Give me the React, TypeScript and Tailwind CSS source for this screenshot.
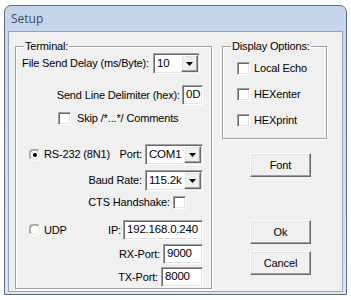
import React from 'react';

const sunken =
  'bg-white border border-t-[#a0a0a0] border-l-[#a0a0a0] border-b-white border-r-white shadow-[inset_1px_1px_0_#696969,inset_-1px_-1px_0_#e3e3e3]';
const raised =
  'bg-[#f0f0f0] border border-t-white border-l-white border-b-[#696969] border-r-[#696969] shadow-[inset_-1px_-1px_0_#a0a0a0,inset_1px_1px_0_#e3e3e3]';

function Combo({ value, w }: { value: string; w: string }) {
  return (
    <div className={`${sunken} ${w} h-[21px] flex items-center p-[1px]`}>
      <span className="flex-1 pl-[2px] text-[11.5px] tracking-[-0.2px] leading-none overflow-hidden whitespace-nowrap">{value}</span>
      <div className={`${raised} w-[17px] h-full shrink-0 flex items-center justify-center`}>
        <svg width="7" height="4" viewBox="0 0 7 4">
          <path d="M0 0h7L3.5 4z" fill="#000" />
        </svg>
      </div>
    </div>
  );
}

function Field({ value, w }: { value: string; w: string }) {
  return (
    <div className={`${sunken} ${w} h-[20px] flex items-center pl-[3px] text-[11.5px] tracking-[-0.2px] leading-none whitespace-nowrap overflow-hidden`}>
      {value}
    </div>
  );
}

function Check() {
  return <div className={`${sunken} w-[13px] h-[13px] shrink-0`} />;
}

function Radio({ on }: { on?: boolean }) {
  return (
    <svg width="12" height="12" viewBox="0 0 12 12" className="shrink-0">
      <circle cx="6" cy="6" r="5.5" fill="#fff" />
      <path d="M1.3 9.9A5.5 5.5 0 0 1 9.9 1.3" stroke="#a0a0a0" fill="none" />
      <path d="M2.2 9.1A4.5 4.5 0 0 1 9.1 2.2" stroke="#696969" fill="none" />
      <path d="M9.9 1.3A5.5 5.5 0 0 1 1.3 9.9" stroke="#fff" fill="none" />
      <path d="M9.1 2.2A4.5 4.5 0 0 1 2.2 9.1" stroke="#e3e3e3" fill="none" />
      {on && <circle cx="6" cy="6" r="2" fill="#000" />}
    </svg>
  );
}

function Group({ title, className, children }: { title: string; className: string; children: React.ReactNode }) {
  return (
    <div className={`relative border border-[#a0a0a0] shadow-[inset_1px_1px_0_#fff,1px_1px_0_#fff] ${className}`}>
      <span className="absolute top-[-7px] left-[8px] px-[1px] bg-[#f0f0f0] leading-[13px]">{title}</span>
      {children}
    </div>
  );
}

function Button({ label, className }: { label: string; className?: string }) {
  return (
    <div className={`${raised} w-[61px] h-[24px] flex items-center justify-center ${className ?? ''}`}>
      {label}
    </div>
  );
}

export default function App() {
  return (
    <div className="min-h-screen bg-white text-black text-[11px] tracking-[-0.15px] font-['Liberation_Sans',Arial,sans-serif]">
      <div className="pt-[5px] pl-[4px]">
        <div className="w-[343px] h-[290px] rounded-t-[7px] border border-[#5f6d80] bg-gradient-to-b from-[#c4d5ec] to-[#d9e5f4] flex flex-col">
          <div className="h-[25px] flex items-center pl-[6px] text-[12px] tracking-normal text-[#3a4a5e] font-['Open_Sans',sans-serif]">
            Setup
          </div>
          <div className="flex-1 mx-[3px] mb-[2px] border border-[#91a5c0] bg-[#f0f0f0] flex pl-[6px] pt-[14px]">
            <Group title="Terminal:" className="w-[197px] h-[243px] flex flex-col">
              <div className="mt-[6px] h-[21px] flex items-center justify-end pr-[11px] gap-[4px]">
                <span>File Send Delay (ms/Byte):</span>
                <Combo value="10" w="w-[47px]" />
              </div>
              <div className="mt-[11px] h-[20px] flex items-center justify-end pr-[8px] gap-[2px]">
                <span>Send Line Delimiter (hex):</span>
                <Field value="0D" w="w-[21px]" />
              </div>
              <div className="mt-[7px] h-[13px] flex items-center pl-[42px] gap-[6px]">
                <Check />
                <span>Skip /*...*/ Comments</span>
              </div>
              <div className="mt-[19px] h-[21px] flex items-center pl-[13px] pr-[8px]">
                <Radio on />
                <span className="ml-[3px]">RS-232 (8N1)</span>
                <span className="ml-auto mr-[3px]">Port:</span>
                <Combo value="COM1" w="w-[58px]" />
              </div>
              <div className="mt-[5px] h-[21px] flex items-center justify-end pr-[8px] gap-[3px]">
                <span>Baud Rate:</span>
                <Combo value="115.2k" w="w-[58px]" />
              </div>
              <div className="mt-[5px] h-[13px] flex items-center justify-end pr-[25px] gap-[3px]">
                <span>CTS Handshake:</span>
                <Check />
              </div>
              <div className="mt-[11px] h-[20px] flex items-center pl-[13px] pr-[8px]">
                <Radio />
                <span className="ml-[3px]">UDP</span>
                <span className="ml-auto mr-[2px]">IP:</span>
                <Field value="192.168.0.240" w="w-[80px]" />
              </div>
              <div className="mt-[4px] h-[20px] flex items-center justify-end pr-[8px] gap-[3px]">
                <span>RX-Port:</span>
                <Field value="9000" w="w-[40px]" />
              </div>
              <div className="mt-[3px] h-[20px] flex items-center justify-end pr-[8px] gap-[3px]">
                <span>TX-Port:</span>
                <Field value="8000" w="w-[42px]" />
              </div>
            </Group>
            <div className="ml-[10px] flex flex-col">
              <Group title="Display Options:" className="w-[105px] h-[93px] flex flex-col pl-[14px] pt-[15px] gap-[13px]">
                {['Local Echo', 'HEXenter', 'HEXprint'].map((t) => (
                  <div key={t} className="h-[13px] flex items-center gap-[4px]">
                    <Check />
                    <span>{t}</span>
                  </div>
                ))}
              </Group>
              <Button label="Font" className="ml-[28px] mt-[14px]" />
              <Button label="Ok" className="ml-[28px] mt-[43px]" />
              <Button label="Cancel" className="ml-[28px] mt-[7px]" />
            </div>
          </div>
        </div>
      </div>
    </div>
  );
}
